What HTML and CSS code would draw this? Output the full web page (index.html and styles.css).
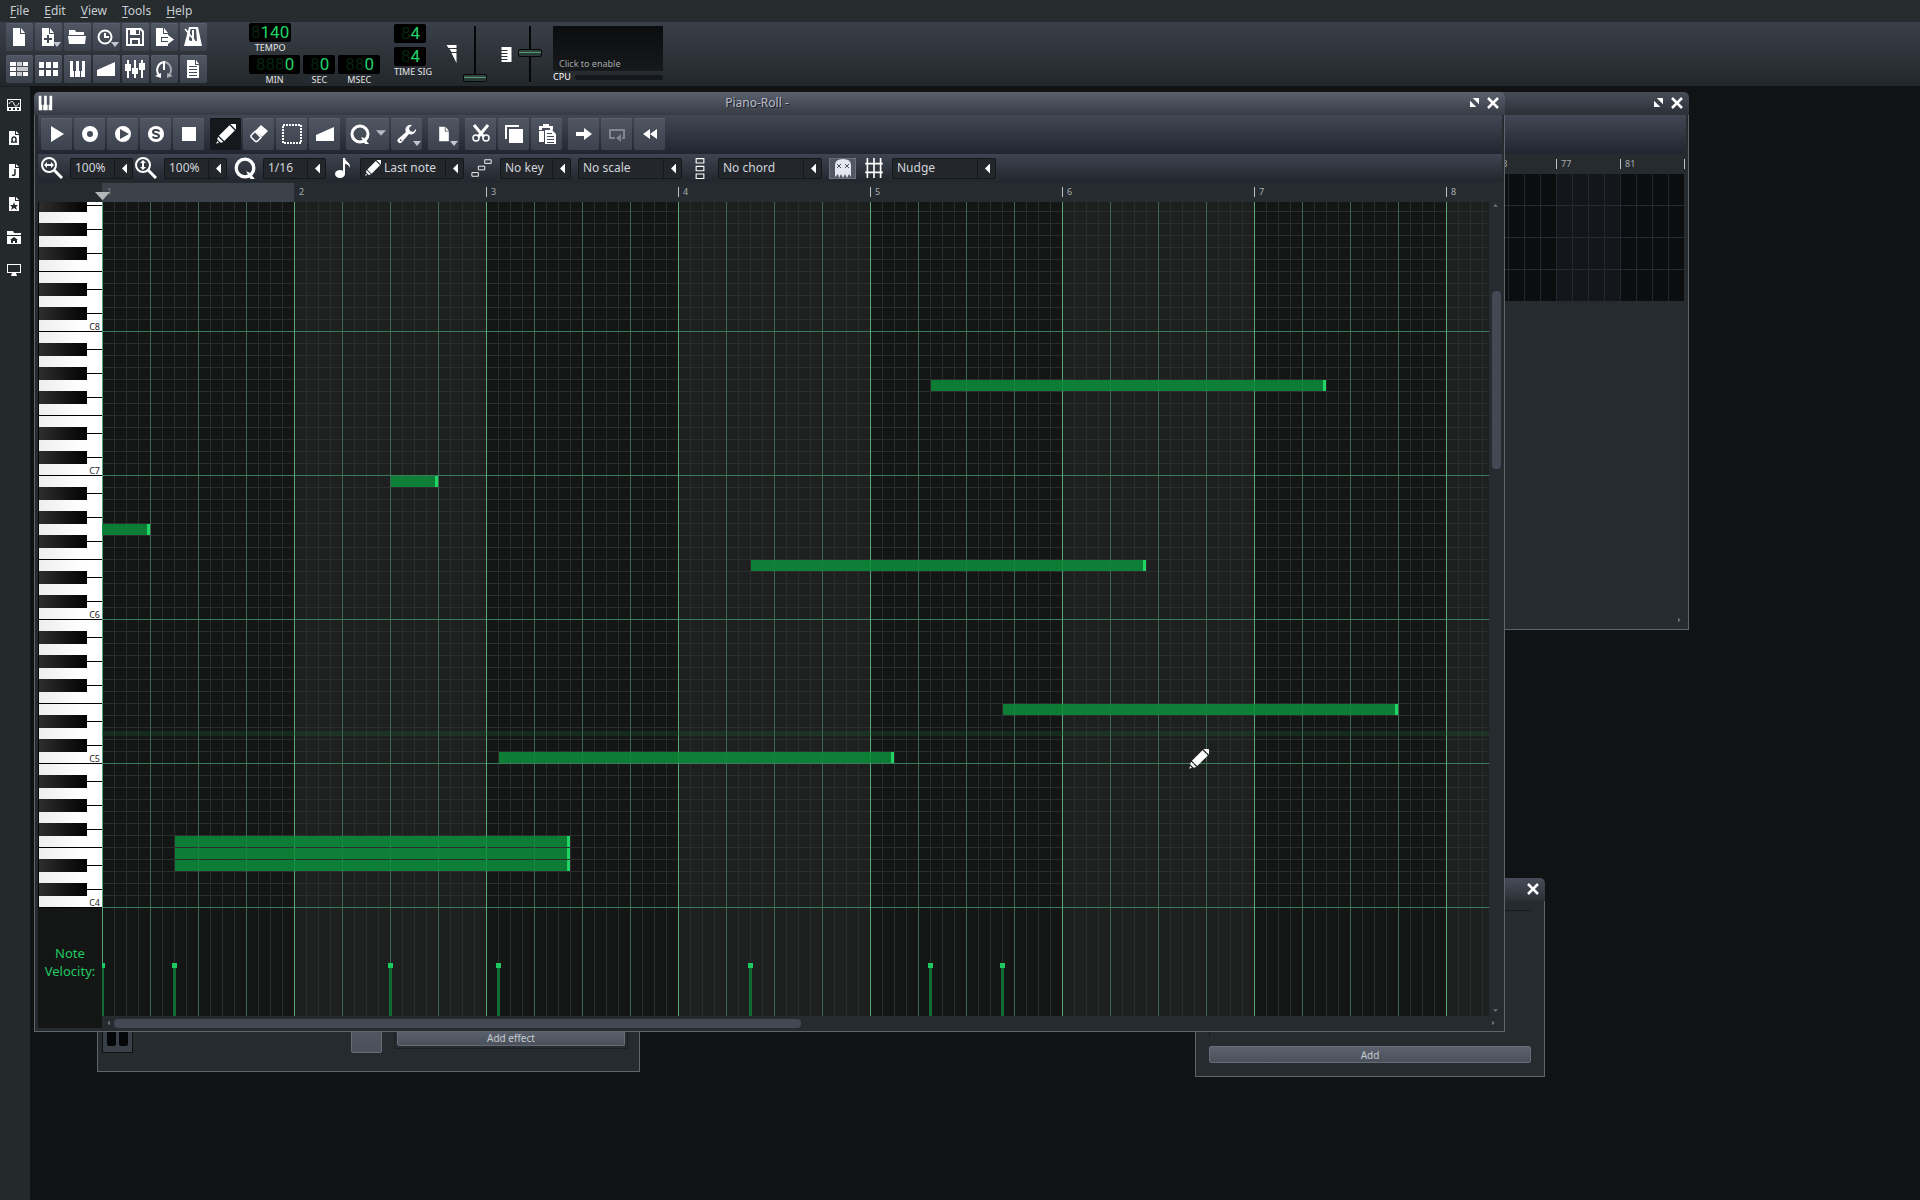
FILE: index.html
```html
<!DOCTYPE html>
<html lang="en">
<head>
<meta charset="utf-8">
<title>Piano-Roll</title>
<link rel="stylesheet" href="styles.css">
</head>
<body>
<svg class="sprite" aria-hidden="true">
  <symbol id="doc" viewBox="0 0 20 20"><path d="M4 1h7v6h5v12H4zM12 1l4 5h-4z"/></symbol>
  <symbol id="doc-add" viewBox="0 0 20 20"><path fill-rule="evenodd" d="M4 1h7v6h5v12H4zM12 1l4 5h-4zM9 8v3H6v2h3v3h2v-3h3v-2h-3V8z"/></symbol>
  <symbol id="folder" viewBox="0 0 20 20"><path d="M2 3h6l1 2h8v3H2zM1 9h18l-1 8H2z"/></symbol>
  <symbol id="recent" viewBox="0 0 20 20"><g fill="none" stroke="currentColor" stroke-width="2"><circle cx="9" cy="10" r="6.5"/><path d="M9 6v4h4"/></g></symbol>
  <symbol id="save" viewBox="0 0 20 20"><path fill-rule="evenodd" d="M1 1h15l3 3v15H1zM3 3v14h2v-6h10v6h2V5l-2-2v5H5V3zM11 3v4h3V3zM7 13v4h6v-4z"/></symbol>
  <symbol id="export" viewBox="0 0 20 20"><path d="M2 1h7v6h5v3H7v5h7v4H2zM10 1l4 5h-4zM8 11h6V8l6 4.500-6 4.500v-3H8z"/></symbol>
  <symbol id="metronome" viewBox="0 0 20 20"><path fill-rule="evenodd" d="M6 0h9l4 19H1zM7.500 2L6 13l2 1h6L13 2z"/><path d="M2 2l10 12" stroke="currentColor" stroke-width="1.500"/><path d="M9 3h2v11H9z"/></symbol>
  <symbol id="song" viewBox="0 0 20 20"><path d="M1 3h6v4H1zM1 8h6v4H1zM1 13h6v4H1zM14 3h5v4h-5zM14 13h5v4h-5z"/><path opacity=".7" d="M8 3h5v4H8zM8 8h11v4H8zM8 13h5v4H8z"/></symbol>
  <symbol id="pattern" viewBox="0 0 20 20"><path d="M1 3h5v6H1zM8 3h5v6H8zM15 3h5v6h-5zM1 11h5v6H1zM8 11h5v6H8zM15 11h5v6h-5z"/></symbol>
  <symbol id="piano" viewBox="0 0 20 20"><path d="M3 2h3v10h1v6H3zM8 12h1V2h3v10h1v6H8zM14 12h1V2h3v16h-4z"/></symbol>
  <symbol id="ramp" viewBox="0 0 20 20"><path d="M1 11l18-8v14H1z"/></symbol>
  <symbol id="mixer" viewBox="0 0 20 20"><path d="M2 1h2v18H2zM9 1h2v18H9zM16 1h2v18h-2zM0 5h6v7H0zM7 9h6v6H7zM14 4h6v7h-6z"/></symbol>
  <symbol id="controller" viewBox="0 0 20 20"><g fill="none" stroke="currentColor" stroke-width="2"><path d="M5 16a8 8 0 0 1 5-13v8"/><path opacity=".5" d="M11 3a8 8 0 0 1 4 13"/></g><path d="M1 17l6-3v5z"/><path opacity=".5" d="M19 17l-6-3v5z"/></symbol>
  <symbol id="notes" viewBox="0 0 20 20"><path fill-rule="evenodd" d="M4 1h8v5h4v13H4zM13 1l3 4h-3zM6 7v1h8V7zM6 10v1h8v-1zM6 13v1h8v-1zM6 16v1h8v-1z"/></symbol>
  <symbol id="play" viewBox="0 0 20 20"><path d="M4 2l13 8-13 8z"/></symbol>
  <symbol id="record" viewBox="0 0 20 20"><circle cx="10" cy="10" r="5.500" fill="none" stroke="currentColor" stroke-width="5"/></symbol>
  <symbol id="record-play" viewBox="0 0 20 20"><path fill-rule="evenodd" d="M10 2a8 8 0 1 0 0 16 8 8 0 0 0 0-16zM7 5l9 5-9 5z"/></symbol>
  <symbol id="step" viewBox="0 0 20 20"><circle cx="10" cy="10" r="8"/><path d="M13.500 7.500C12 5.500 7 5.500 7 8s6 1.500 6 4-5 2.500-6.500.5" fill="none" stroke="#3b404b" stroke-width="2"/></symbol>
  <symbol id="stop" viewBox="0 0 20 20"><path d="M3 3h14v14H3z"/></symbol>
  <symbol id="pencil" viewBox="2 2 16 16"><g transform="rotate(45 10 10)"><path d="M7 0q3-2 6 0v2H7zM7 3h6v12H7zM7 16h6l-1 2H8zM9 19h2l-1 2z"/></g></symbol>
  <symbol id="eraser" viewBox="0 0 20 20"><path d="M12 1l7 6-6 6-7-6z"/><path d="M6 7.500l6 6-4 4H6.500L2 13v-1.500z" fill="none" stroke="currentColor" stroke-width="1.500"/></symbol>
  <symbol id="select" viewBox="0 0 20 20"><path d="M1 1h18v18H1z" fill="none" stroke="currentColor" stroke-width="2" stroke-dasharray="2 1"/></symbol>
  <symbol id="quant" viewBox="0 0 20 20"><circle cx="10" cy="10" r="8" fill="none" stroke="currentColor" stroke-width="3"/><path d="M11 13l3 1 5 6h-4z"/></symbol>
  <symbol id="wrench" viewBox="0 0 20 20"><path fill-rule="evenodd" d="M19 5a5 5 0 0 1-7 5l-7 8a2.500 2.500 0 0 1-4-3l8-7a5 5 0 0 1 6-7l-3 3 1 3 3 1zM3 15.500v1.500h1.500v-1.500z"/></symbol>
  <symbol id="cut" viewBox="0 0 20 20"><path d="M3 1l10 12M17 1L7 13" stroke="currentColor" stroke-width="3"/><g fill="none" stroke="currentColor" stroke-width="1.500"><circle cx="5" cy="14" r="3"/><circle cx="15" cy="14" r="3"/></g></symbol>
  <symbol id="copy" viewBox="0 0 20 20"><path d="M5 5h14v14H5zM1 1h14v2H3v12H1z"/></symbol>
  <symbol id="paste" viewBox="0 0 20 20"><path d="M2 2h4V0h6v2h4v4h-3V4H5v2H2z M2 7h5v11H2z"/><path fill-rule="evenodd" d="M8 6h7l4 4v10H8zM10 9v1h5V9zM10 12v1h7v-1zM10 15v1h7v-1zM10 18v1h7v-1z"/></symbol>
  <symbol id="arrow" viewBox="0 0 20 20"><path d="M2 8h8V4l8 6-8 6v-4H2z"/></symbol>
  <symbol id="loop" viewBox="0 0 20 20"><path d="M8 14H3V6h14v8h-2" fill="none" stroke="currentColor" stroke-width="2"/><path d="M14 10v8l-5-4z"/></symbol>
  <symbol id="rewind" viewBox="0 0 20 20"><path d="M10 5v10l-7-5zM17 5v10l-7-5z"/></symbol>
  <symbol id="zoom-x" viewBox="0 0 22 22"><circle cx="8" cy="8" r="7" fill="none" stroke="currentColor" stroke-width="2"/><path d="M13 13l8 8" stroke="currentColor" stroke-width="3"/><path d="M3 8l3-3v2h4V5l3 3-3 3V9H6v2z"/></symbol>
  <symbol id="zoom-y" viewBox="0 0 22 22"><circle cx="8" cy="8" r="7" fill="none" stroke="currentColor" stroke-width="2"/><path d="M13 13l8 8" stroke="currentColor" stroke-width="3"/><path d="M8 3l3 3H9v4h2l-3 3-3-3h2V6H5z"/></symbol>
  <symbol id="eighth" viewBox="0 0 20 20"><ellipse cx="7" cy="16" rx="5" ry="4"/><path d="M10 0h2c0 4 6 4 5 10-1-3-3-4-5-4v10h-2z"/></symbol>
  <symbol id="scale" viewBox="0 0 24 20"><path d="M1 15h7v4H1zM8 8h7v4H8zM15 1h7v4h-7z" fill="none" stroke="currentColor"/></symbol>
  <symbol id="chord" viewBox="0 0 10 20"><path d="M1.500 1.500h7v4h-7zM1.500 8.500h7v4h-7zM1.500 15.500h7v4h-7z" fill="none" stroke="currentColor"/></symbol>
  <symbol id="ghost" viewBox="0 0 20 20"><path d="M2 19V7q0-6 8-6t8 6v12l-2-3-2 4-2-4-2 4-2-4-2 4-1-4z"/><path d="M4 6l4 4m0-4l-4 4M12 6l4 4m0-4l-4 4" stroke="#4a4f5b"/></symbol>
  <symbol id="snap" viewBox="0 0 20 20"><path d="M4 1v18M16 1v18M2 6h16M2 14h16M10 1v18" fill="none" stroke="currentColor" stroke-width="1.500"/></symbol>
  <symbol id="max" viewBox="0 0 10 10"><path d="M3 0h7v7zM0 3l7 7H0z"/></symbol>
  <symbol id="close" viewBox="0 0 12 12"><path d="M1 1l10 10M11 1L1 11" stroke="currentColor" stroke-width="2.500"/></symbol>
  <symbol id="side-wave" viewBox="0 0 14 14"><path fill-rule="evenodd" d="M0 1h14v12H0zM1 2v7h12V2zM2 10v2h2v-2zM6 10v2h2v-2zM10 10v2h2v-2z"/><path d="M2 6c2-4 4-3 5 0s3 3 5-1" fill="none" stroke="currentColor"/></symbol>
  <symbol id="side-sample" viewBox="0 0 14 14"><path d="M2 0h6v4h4v10H2zM9 0l3 3H9z"/><path d="M4 11h2c-2-2-1-5 1-5s3 3 1 5h2" fill="none" stroke="#24292c" stroke-width="1.500"/></symbol>
  <symbol id="side-preset" viewBox="0 0 14 14"><path d="M2 0h6v4h4v10H2zM9 0l3 3H9z"/><path d="M8 5v5q0 2-3 1" fill="none" stroke="#24292c" stroke-width="1.500"/></symbol>
  <symbol id="side-star" viewBox="0 0 14 14"><path fill-rule="evenodd" d="M2 0h6v4h4v10H2zM9 0l3 3H9zM7 5L6 8H3l2 2-1 3 3-2 3 2-1-3 2-2H8z"/></symbol>
  <symbol id="side-home" viewBox="0 0 14 14"><path fill-rule="evenodd" d="M0 1h6l1 2h7v2H0zM0 6h14v8H0zM7 7l-4 3h1v3h2v-2h2v2h2v-3h1z"/></symbol>
  <symbol id="side-computer" viewBox="0 0 14 14"><path fill-rule="evenodd" d="M0 1h14v9H0zM1 2v7h12V2zM5 10h4l1 3H4z"/></symbol>
  <symbol id="volume" viewBox="0 0 10 18"><path d="M0 0h10v3H2zM3 4h7v3H5zM5 8h5v10z"/></symbol>
  <symbol id="pitch" viewBox="0 0 10 15"><path d="M0 0h10v15H0v-2h6v-1H0v-2h6V9H0V7h6V6H0V4h6V3H0z"/></symbol>
  <symbol id="tri" viewBox="0 0 9 6"><path d="M0 0h9L4.500 5z"/></symbol>
</svg>

<nav class="menubar">
  <button><u>F</u>ile</button><button><u>E</u>dit</button><button><u>V</u>iew</button><button><u>T</u>ools</button><button><u>H</u>elp</button>
</nav>

<header class="main-toolbar">
  <div class="tool-grid">
    <button aria-label="New project"><svg><use href="#doc"/></svg></button>
    <button aria-label="New from template" class="has-menu"><svg><use href="#doc-add"/></svg></button>
    <button aria-label="Open project"><svg><use href="#folder"/></svg></button>
    <button aria-label="Recent projects" class="has-menu"><svg><use href="#recent"/></svg></button>
    <button aria-label="Save project"><svg><use href="#save"/></svg></button>
    <button aria-label="Export project"><svg><use href="#export"/></svg></button>
    <button aria-label="Metronome"><svg><use href="#metronome"/></svg></button>
    <button aria-label="Song editor"><svg><use href="#song"/></svg></button>
    <button aria-label="Pattern editor"><svg><use href="#pattern"/></svg></button>
    <button aria-label="Piano roll"><svg><use href="#piano"/></svg></button>
    <button aria-label="Automation editor"><svg><use href="#ramp"/></svg></button>
    <button aria-label="Mixer"><svg><use href="#mixer"/></svg></button>
    <button aria-label="Controller rack"><svg><use href="#controller"/></svg></button>
    <button aria-label="Project notes"><svg><use href="#notes"/></svg></button>
  </div>
  <div class="clock">
    <div class="field tempo"><output class="lcd" data-unlit="8">140</output><span>TEMPO</span></div>
    <div class="clock-row">
      <div class="field"><output class="lcd" data-unlit="888">0</output><span>MIN</span></div>
      <div class="field"><output class="lcd" data-unlit="8">0</output><span>SEC</span></div>
      <div class="field"><output class="lcd" data-unlit="88">0</output><span>MSEC</span></div>
    </div>
  </div>
  <div class="signature"><output class="lcd" data-unlit="8">4</output><output class="lcd" data-unlit="8">4</output><span>TIME SIG</span></div>
  <div class="master"><svg class="volume"><use href="#volume"/></svg><input type="range" aria-label="Master volume" min="0" max="100" value="0"></div>
  <div class="master"><svg class="pitch"><use href="#pitch"/></svg><input type="range" aria-label="Master pitch" min="0" max="100" value="52"></div>
  <div class="monitor">
    <button class="scope">Click to enable</button>
    <div class="cpu"><span>CPU</span><div class="load"></div></div>
  </div>
</header>

<div class="workspace">
  <aside class="sidebar">
    <button aria-label="Instrument plugins"><svg><use href="#side-wave"/></svg></button>
    <button aria-label="My samples"><svg><use href="#side-sample"/></svg></button>
    <button aria-label="My presets"><svg><use href="#side-preset"/></svg></button>
    <button aria-label="My projects"><svg><use href="#side-star"/></svg></button>
    <button aria-label="My home"><svg><use href="#side-home"/></svg></button>
    <button aria-label="My computer"><svg><use href="#side-computer"/></svg></button>
  </aside>

  <main class="desktop">
    <section class="window song-window">
      <div class="titlebar"><div class="win-buttons"><button aria-label="Maximize"><svg class="max"><use href="#max"/></svg></button><button aria-label="Close"><svg class="close"><use href="#close"/></svg></button></div></div>
      <div class="window-body">
        <div class="strip strip-tall"></div>
        <div class="song-ruler"><span>73</span><span>77</span><span>81</span><span></span></div>
        <div class="song-grid"></div>
        <div class="song-empty"><svg class="nub right"><use href="#tri"/></svg></div>
      </div>
    </section>

    <section class="window instrument-window">
      <div class="window-body instrument-body">
        <div class="leds"><i></i><i></i></div>
        <button class="small-button" aria-label="Send channel"></button>
        <div class="effect-frame"><button class="small-button">Add effect</button></div>
      </div>
    </section>

    <section class="window rack-window">
      <div class="titlebar"><div class="win-buttons"><button aria-label="Close"><svg class="close"><use href="#close"/></svg></button></div></div>
      <div class="window-body rack-body"><div class="rack-list"></div><button class="small-button">Add</button></div>
    </section>

    <section class="window roll-window">
      <div class="titlebar active">
        <svg class="title-icon"><use href="#piano"/></svg>
        <h1>Piano-Roll -</h1>
        <div class="win-buttons"><button aria-label="Maximize"><svg class="max"><use href="#max"/></svg></button><button aria-label="Close"><svg class="close"><use href="#close"/></svg></button></div>
      </div>
      <div class="window-body">
        <div class="strip strip-tall">
          <div class="group">
            <button aria-label="Play"><svg><use href="#play"/></svg></button>
            <button aria-label="Record"><svg><use href="#record"/></svg></button>
            <button aria-label="Record while playing"><svg><use href="#record-play"/></svg></button>
            <button aria-label="Step record"><svg><use href="#step"/></svg></button>
            <button aria-label="Stop"><svg><use href="#stop"/></svg></button>
          </div>
          <div class="group">
            <button aria-label="Draw" class="pressed"><svg><use href="#pencil"/></svg></button>
            <button aria-label="Erase"><svg><use href="#eraser"/></svg></button>
            <button aria-label="Select"><svg><use href="#select"/></svg></button>
            <button aria-label="Pitch bend"><svg><use href="#ramp"/></svg></button>
          </div>
          <div class="group">
            <button aria-label="Quantize" class="wide"><svg><use href="#quant"/></svg><svg class="tri"><use href="#tri"/></svg></button>
            <button aria-label="Note tools" class="has-menu"><svg><use href="#wrench"/></svg></button>
          </div>
          <div class="group"><button aria-label="File actions" class="has-menu small-icon"><svg><use href="#doc"/></svg></button></div>
          <div class="group">
            <button aria-label="Cut"><svg><use href="#cut"/></svg></button>
            <button aria-label="Copy"><svg><use href="#copy"/></svg></button>
            <button aria-label="Paste"><svg><use href="#paste"/></svg></button>
          </div>
          <div class="group">
            <button aria-label="Auto scroll"><svg><use href="#arrow"/></svg></button>
            <button aria-label="Loop points" class="dim"><svg><use href="#loop"/></svg></button>
            <button aria-label="Rewind on stop"><svg><use href="#rewind"/></svg></button>
          </div>
        </div>

        <div class="strip options">
          <label class="option"><svg class="lens"><use href="#zoom-x"/></svg><span class="combo"><select aria-label="Horizontal zoom"><option>100%</option></select></span></label>
          <label class="option"><svg class="lens"><use href="#zoom-y"/></svg><span class="combo"><select aria-label="Vertical zoom"><option>100%</option></select></span></label>
          <label class="option"><svg class="lens"><use href="#quant"/></svg><span class="combo"><select aria-label="Quantization"><option>1/16</option></select></span></label>
          <label class="option"><svg class="lens narrow"><use href="#eighth"/></svg><span class="combo long"><svg><use href="#pencil"/></svg><select aria-label="Note length"><option>Last note</option></select></span></label>
          <label class="option"><svg class="lens"><use href="#scale"/></svg><span class="combo mid"><select aria-label="Key"><option>No key</option></select></span></label>
          <span class="combo long"><select aria-label="Scale"><option>No scale</option></select></span>
          <label class="option"><svg class="lens"><use href="#chord"/></svg><span class="combo long"><select aria-label="Chord"><option>No chord</option></select></span></label>
          <button class="ghost" aria-label="Show ghost notes"><svg><use href="#ghost"/></svg></button>
          <label class="option snap"><svg class="lens"><use href="#snap"/></svg><span class="combo long"><select aria-label="Snap mode"><option>Nudge</option></select></span></label>
        </div>

        <div class="editor">
          <div class="ruler"><span class="loop">1</span><span>2</span><span>3</span><span>4</span><span>5</span><span>6</span><span>7</span><span>8</span><svg class="playhead"><use href="#tri"/></svg></div>
          <div class="keys">
            <div class="octave">C8</div><div class="octave">C7</div><div class="octave">C6</div><div class="octave">C5</div><div class="octave">C4</div>
          </div>
          <div class="note-grid">
            <div class="key-highlight"></div>
            <div class="note" style="left:0px;top:322px;width:48px"></div>
            <div class="note" style="left:289px;top:274px;width:47px"></div>
            <div class="note" style="left:829px;top:178px;width:395px"></div>
            <div class="note" style="left:649px;top:358px;width:395px"></div>
            <div class="note" style="left:901px;top:502px;width:395px"></div>
            <div class="note" style="left:397px;top:550px;width:395px"></div>
            <div class="note" style="left:73px;top:634px;width:395px"></div>
            <div class="note" style="left:73px;top:646px;width:395px"></div>
            <div class="note" style="left:73px;top:658px;width:395px"></div>
            <svg class="cursor"><use href="#pencil"/></svg>
          </div>
          <div class="scroll-v"><svg class="nub up"><use href="#tri"/></svg><div class="thumb"></div><svg class="nub down"><use href="#tri"/></svg></div>
          <div class="param-name">Note Velocity:</div>
          <div class="velocity">
            <i style="left:0px"></i><i style="left:72px"></i><i style="left:288px"></i><i style="left:396px"></i><i style="left:648px"></i><i style="left:828px"></i><i style="left:900px"></i>
          </div>
          <div class="scroll-h"><svg class="nub left"><use href="#tri"/></svg><div class="thumb"></div><svg class="nub right"><use href="#tri"/></svg></div>
        </div>
      </div>
    </section>
  </main>
</div>
</body>
</html>
```
FILE: styles.css
```css
* { box-sizing: border-box; }
body {
  margin: 0;
  min-height: 100vh;
  display: flex;
  flex-direction: column;
  background: #111214;
  color: #d3d8de;
  font: 12px/16px "Noto Sans", "Open Sans", sans-serif;
}
svg { display: block; flex: none; fill: currentColor; }
.sprite { position: absolute; width: 0; height: 0; }
button { margin: 0; padding: 0; border: 0; background: none; color: inherit; font: inherit; }

/* menu bar */
.menubar { display: flex; gap: 15px; height: 22px; padding-left: 10px; background: #262b2e; }
.menubar button { color: #c9ced3; }
.menubar u { text-underline-offset: 2px; }

/* main toolbar */
.main-toolbar {
  display: flex;
  align-items: flex-start;
  height: 64px;
  padding: 1px 6px;
  background: linear-gradient(#3a4049, #22272b);
}
.tool-grid { display: grid; grid-template-columns: repeat(7, 27px); gap: 4px 2px; }
.tool-grid button, .group button {
  position: relative;
  display: flex;
  align-items: center;
  justify-content: center;
  border-radius: 2px;
  box-shadow: inset 0 1px #5a606d;
  background: linear-gradient(#505662, #3c424d);
  color: #fff;
}
.tool-grid button { height: 28px; padding: 0 2px 1px 0; }
.tool-grid svg, .group svg { width: 20px; height: 20px; }
.has-menu::after {
  content: "";
  position: absolute;
  right: 1px;
  bottom: 4px;
  width: 8px;
  height: 5px;
  background: #c3c8cf;
  clip-path: polygon(0 0, 100% 0, 50% 100%);
}
.clock { margin-left: 42px; width: 132px; display: flex; flex-direction: column; gap: 2px; }
.clock-row { display: flex; gap: 3px; }
.field { display: flex; flex-direction: column; align-items: center; font-size: 9px; line-height: 11px; color: #e6e6e6; }
.tempo { align-self: flex-start; }
.lcd {
  padding: 0 6px 0 7px;
  border-radius: 2px;
  background: #000;
  color: #22d468;
  font: 17px/19px Roboto, sans-serif;
}
.tempo .lcd { padding: 0 2px; }
.lcd::before { content: attr(data-unlit); color: #06230f; }
.signature { margin: 1px 0 0 13px; width: 40px; display: flex; flex-direction: column; align-items: flex-start; gap: 4px; font-size: 9px; line-height: 11px; color: #e6e6e6; white-space: nowrap; }
.signature span { margin-top: -4px; }
.master { display: flex; align-items: center; gap: 5px; height: 62px; margin-left: 12px; color: #fff; }
.master + .master { margin-left: 13px; }
.volume { width: 11px; height: 18px; }
.pitch { width: 11px; height: 15px; }
.master input {
  appearance: none;
  writing-mode: vertical-lr;
  direction: rtl;
  width: 26px;
  height: 56px;
  margin: 0;
  background: linear-gradient(90deg, transparent 12px, #050607 12px 14px, transparent 14px);
}
.master input::-webkit-slider-thumb {
  appearance: none;
  width: 24px;
  height: 8px;
  border: 1px solid #050607;
  border-radius: 2px;
  background: linear-gradient(#35433f 2px, #4f9a77 2px 3px, #2b3a37 3px);
}
.monitor { margin: 3px 0 0 10px; width: 110px; }
.scope {
  display: flex;
  align-items: flex-end;
  width: 100%;
  height: 45px;
  padding: 0 6px;
  background: linear-gradient(#0b0c0d, #17191b);
  color: #a5a8ab;
  font-size: 9px;
  line-height: 14px;
}
.cpu { display: flex; align-items: center; gap: 4px; color: #fff; font-size: 9px; line-height: 12px; }
.load { flex: 1; height: 5px; border-radius: 2px; background: #15181b; }

/* workspace */
.workspace { flex: 1; display: flex; }
.sidebar { width: 30px; padding: 11px 0 0 7px; display: flex; flex-direction: column; gap: 19px; background: #24292c; color: #fff; border-top: 1px solid #1b1e20; }
.sidebar svg { width: 14px; height: 14px; }
.desktop { position: relative; flex: 1; overflow: hidden; }

/* sub-windows, free on the desktop */
.window { position: absolute; display: flex; flex-direction: column; }
.roll-window { left: 4px; top: 6px; width: 1471px; }
.song-window { left: 1000px; top: 6px; width: 659px; height: 538px; }
.instrument-window { left: 67px; top: 900px; width: 543px; }
.rack-window { left: 1165px; top: 792px; width: 350px; height: 199px; }
.titlebar {
  display: flex;
  align-items: center;
  height: 23px;
  padding: 0 6px 2px 5px;
  border-radius: 5px 5px 0 0;
  background: linear-gradient(#474c58, #2b3037);
  color: #fff;
}
.titlebar.active { background: linear-gradient(#5b616d, #363b45); }
.title-icon { width: 18px; height: 18px; margin-left: -3px; }
h1 { flex: 1; margin: 0; padding-right: 10px; text-align: center; color: #b9bdcb; font-size: 12px; font-weight: 400; line-height: 18px; text-shadow: 1px 1px #1c1f27; }
.win-buttons { display: flex; align-items: center; gap: 8px; margin-left: auto; }
.max { width: 9px; height: 9px; }
.close { width: 12px; height: 12px; }
.window-body {
  flex: 1;
  display: flex;
  flex-direction: column;
  padding: 0 2px 3px 3px;
  border: solid #5f656b;
  border-width: 0 1px 1px;
  background: #262b2f;
}
.strip { display: flex; align-items: center; height: 28px; background: linear-gradient(#3e4450, #22262d); }
.strip-tall { height: 39px; padding: 0 3px 1px; gap: 6px; background: linear-gradient(#414753, #22252f); }
.group { display: flex; gap: 2px; }
.group button { width: 31px; height: 32px; padding-bottom: 1px; }
.group .wide { width: 43px; gap: 6px; }
.group .tri { width: 10px; height: 7px; color: #b5bac4; }
.group .small-icon svg { width: 16px; height: 16px; }
.group .dim { color: #81858f; }
.group .pressed { background: #15181d; box-shadow: inset 0 1px #101216; }

/* drop-down row */
.options { padding-left: 3px; gap: 7px; }
.option { display: flex; align-items: center; gap: 7px; color: #fff; }
.option + .option { margin-left: -5px; }
.option + .option ~ .option { margin-left: 0; }
.lens { width: 22px; height: 22px; }
.lens.narrow { width: 20px; }
.combo {
  position: relative;
  display: flex;
  align-items: center;
  width: 63px;
  height: 21px;
  border: 1px solid #14171b;
  border-radius: 2px;
  background: linear-gradient(90deg, transparent 43px, #14171b 43px 44px, transparent 44px) #23272c;
}
.combo.mid { width: 71px; background: linear-gradient(90deg, transparent 51px, #14171b 51px 52px, transparent 52px) #23272c; }
.combo.long { width: 104px; background: linear-gradient(90deg, transparent 84px, #14171b 84px 85px, transparent 85px) #23272c; }
.combo::after {
  content: "";
  position: absolute;
  right: 5px;
  top: 5px;
  width: 5px;
  height: 10px;
  background: #fff;
  clip-path: polygon(100% 0, 100% 100%, 0 50%);
}
.combo svg { width: 16px; height: 16px; margin-left: 4px; margin-right: -1px; }
.combo select { appearance: none; flex: 1; min-width: 0; height: 19px; padding: 0 0 0 4px; border: 0; background: none; color: #d2d5d9; font: inherit; }
.ghost { display: flex; align-items: center; justify-content: center; width: 27px; height: 21px; border: 1px solid #6b707b; background: #525763; color: #e4e6f0; }
.ghost svg { width: 20px; height: 20px; }

/* editor */
.editor {
  display: grid;
  grid-template-columns: 64px 1fr 13px;
  grid-template-rows: 20px 706px 108px 12px;
}
.ruler { grid-column: 2 / 4; position: relative; display: flex; padding-top: 1px; overflow: visible; }
.ruler span {
  flex: none;
  width: 192px;
  padding-left: 5px;
  background: linear-gradient(#c0c3c5, #c0c3c5) 0 4px / 1px 10px no-repeat;
  color: #a9adaf;
  font-size: 9px;
  line-height: 17px;
}
.ruler span:nth-child(2) { background: none; }
.ruler span:nth-child(8) { width: 40px; }
.ruler .loop { background: #3c424a; color: #777c82; }
.playhead { position: absolute; left: -8px; bottom: 0; width: 17px; height: 10px; color: #b4b6b8; }
.keys {
  grid-column: 1;
  display: flex;
  flex-direction: column;
  justify-content: flex-end;
  padding-left: 1px;
  background: #050607;
  overflow: hidden;
}
.octave {
  --black: linear-gradient(90deg, #2e2e2e, #060606 90%, #000);
  --line: linear-gradient(#000, #000);
  flex: none;
  display: flex;
  align-items: flex-end;
  justify-content: flex-end;
  height: 144px;
  padding-right: 2px;
  background:
    var(--black) 0 11px / 48px 13px, var(--black) 0 35px / 48px 13px, var(--black) 0 59px / 48px 13px,
    var(--black) 0 95px / 48px 13px, var(--black) 0 119px / 48px 13px,
    var(--line) 0 17px / 63px 1px, var(--line) 0 41px / 63px 1px, var(--line) 0 65px / 63px 1px,
    var(--line) 0 83px / 63px 1px, var(--line) 0 101px / 63px 1px, var(--line) 0 125px / 63px 1px,
    var(--line) 0 143px / 63px 1px,
    linear-gradient(90deg, #eee, #fff 70%);
  background-repeat: no-repeat;
  color: #1c1c1c;
  font-size: 9px;
  line-height: 11px;
}
.note-grid, .velocity {
  --bars: repeating-linear-gradient(90deg, #58a47b 0 1px, transparent 1px 192px);
  --beats: repeating-linear-gradient(90deg, #3c6753 0 1px, transparent 1px 48px);
  --steps: repeating-linear-gradient(90deg, #2b2e2d 0 1px, transparent 1px 12px);
  --shade: repeating-linear-gradient(90deg, #131615 0 192px, #1e201f 192px 384px);
  position: relative;
  overflow: hidden;
}
.note-grid {
  background:
    var(--bars),
    repeating-linear-gradient(0deg, #3b7a5b 0 1px, transparent 1px 144px),
    var(--beats),
    repeating-linear-gradient(0deg, #2b2e2d 0 1px, transparent 1px 12px),
    var(--steps), var(--shade);
}
.velocity { background: var(--bars), var(--beats), var(--steps), var(--shade); }
.key-highlight { position: absolute; left: 0; right: 0; top: 529px; height: 5px; background: #1c6b3a40; }
.note { position: absolute; height: 11px; border-right: 3px solid #1fd365; background: #0d8c3ae0; }
.cursor { position: absolute; left: 1087px; top: 547px; width: 20px; height: 20px; color: #fff; }
.param-name { display: flex; align-items: center; justify-content: center; grid-row: 3 / 5; grid-column: 1; padding: 0 4px 12px; background: #131615; color: #20c963; font-size: 13px; line-height: 18px; text-align: center; }
.velocity { grid-column: 2; }
.velocity i { position: absolute; bottom: 0; width: 3px; height: 52px; margin-left: -1px; background: #126b32; }
.velocity i::before { content: ""; position: absolute; left: -1px; top: -1px; width: 5px; height: 5px; background: #1fc962; }
.scroll-v { grid-row: 2 / 4; grid-column: 3; display: flex; flex-direction: column; align-items: center; padding: 1px 0 3px; }
.scroll-v .thumb { width: 9px; height: 178px; margin: 84px 0 auto 2px; border-radius: 4px; background: #424954; }
.scroll-h { grid-column: 2 / 4; grid-row: 4; display: flex; align-items: center; padding: 2px 6px 0 4px; }
.scroll-h .thumb { width: 687px; height: 9px; margin: 0 auto 0 3px; border-radius: 4px; background: #424954; }
.nub { width: 5px; height: 4px; color: #6b7074; }
.nub.up { transform: rotate(180deg); }
.nub.left { transform: rotate(90deg); }
.nub.right { transform: rotate(-90deg); }

/* song editor behind */
.song-ruler { display: flex; justify-content: flex-end; height: 20px; padding-right: 1px; }
.song-ruler span { flex: none; width: 64px; padding-left: 5px; background: linear-gradient(#c0c3c5, #c0c3c5) 0 5px / 1px 10px no-repeat; color: #a9adaf; font-size: 9px; line-height: 20px; }
.song-ruler span:last-child { width: 1px; padding: 0; }
.song-grid {
  height: 127px;
  margin-right: 2px;
  background:
    repeating-linear-gradient(0deg, transparent 0 31px, #282c32 31px 32px),
    repeating-linear-gradient(270deg, transparent 0 15px, #24282e 15px 16px),
    repeating-linear-gradient(270deg, #0c0d0f 0 64px, #14161b 64px 128px);
}
.song-empty { flex: 1; display: flex; align-items: flex-end; justify-content: flex-end; padding: 4px; }

/* instrument window and controller rack */
.instrument-body { flex: none; flex-direction: row; height: 86px; align-items: flex-start; padding: 0 11px 0 4px; }
.leds { display: flex; gap: 3px; width: 31px; height: 67px; padding: 0 4px 6px; border: 1px solid #0e1012; background: #3a4047; }
.leds i { flex: 1; border-radius: 2px; background: #050607; }
.small-button { border: 1px solid #666c77; border-radius: 2px; background: linear-gradient(#5c626d, #4b515b); color: #c6cbd3; font-size: 10px; line-height: 14px; }
.leds + .small-button { width: 31px; height: 67px; margin-left: 218px; }
.effect-frame { flex: 1; height: 63px; margin-left: 12px; padding: 0 2px 2px; border: 1px solid #1b1f22; display: flex; align-items: flex-end; }
.effect-frame .small-button { flex: 1; height: 17px; }
.rack-body { padding: 9px 13px 13px; }
.rack-list { flex: 1; margin-bottom: 9px; border: solid #181b1e; border-width: 1px 0 0 1px; }
.rack-body .small-button { height: 17px; }
```
